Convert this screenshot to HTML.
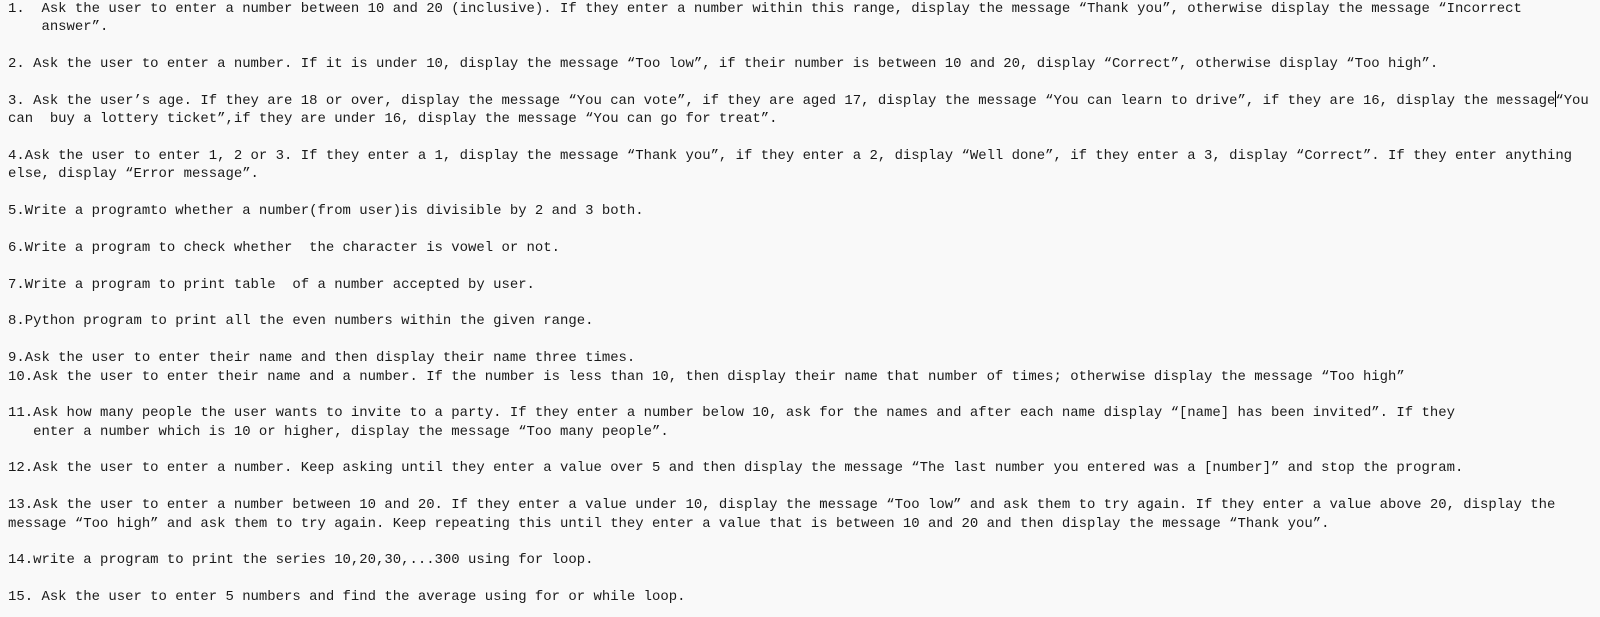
<!DOCTYPE html>
<html><head><meta charset="utf-8"><style>
html,body{margin:0;padding:0;background:#f9f9f9;width:1600px;height:617px;overflow:hidden}
pre{margin:0 0 0 8px;font-family:"Liberation Mono",monospace;font-size:13.95px;line-height:18.38px;color:#1a1a1a;white-space:pre}
.c{position:relative;display:inline-block;width:0;height:0}
.c:before{content:"";position:absolute;left:0;top:-13px;width:1px;height:16px;background:#000}
</style></head><body><pre>1.  Ask the user to enter a number between 10 and 20 (inclusive). If they enter a number within this range, display the message “Thank you”, otherwise display the message “Incorrect
    answer”.

2. Ask the user to enter a number. If it is under 10, display the message “Too low”, if their number is between 10 and 20, display “Correct”, otherwise display “Too high”.

3. Ask the user’s age. If they are 18 or over, display the message “You can vote”, if they are aged 17, display the message “You can learn to drive”, if they are 16, display the message<span class="c"></span>“You
can  buy a lottery ticket”,if they are under 16, display the message “You can go for treat”.

4.Ask the user to enter 1, 2 or 3. If they enter a 1, display the message “Thank you”, if they enter a 2, display “Well done”, if they enter a 3, display “Correct”. If they enter anything
else, display “Error message”.

5.Write a programto whether a number(from user)is divisible by 2 and 3 both.

6.Write a program to check whether  the character is vowel or not.

7.Write a program to print table  of a number accepted by user.

8.Python program to print all the even numbers within the given range.

9.Ask the user to enter their name and then display their name three times.
10.Ask the user to enter their name and a number. If the number is less than 10, then display their name that number of times; otherwise display the message “Too high”

11.Ask how many people the user wants to invite to a party. If they enter a number below 10, ask for the names and after each name display “[name] has been invited”. If they
   enter a number which is 10 or higher, display the message “Too many people”.

12.Ask the user to enter a number. Keep asking until they enter a value over 5 and then display the message “The last number you entered was a [number]” and stop the program.

13.Ask the user to enter a number between 10 and 20. If they enter a value under 10, display the message “Too low” and ask them to try again. If they enter a value above 20, display the
message “Too high” and ask them to try again. Keep repeating this until they enter a value that is between 10 and 20 and then display the message “Thank you”.

14.write a program to print the series 10,20,30,...300 using for loop.

15. Ask the user to enter 5 numbers and find the average using for or while loop.</pre></body></html>
